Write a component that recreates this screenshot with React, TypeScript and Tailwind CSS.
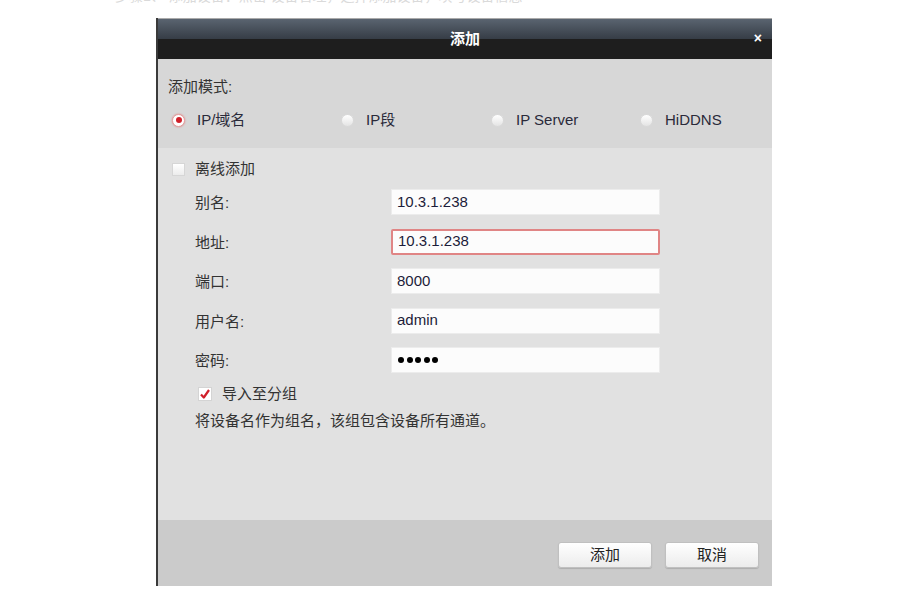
import React from 'react';

const font = { fontFamily: '"Liberation Sans", "Noto Sans CJK SC", sans-serif' };

const fields = [
  { label: '别名:', value: '10.3.1.238', error: false, secret: false },
  { label: '地址:', value: '10.3.1.238', error: true, secret: false },
  { label: '端口:', value: '8000', error: false, secret: false },
  { label: '用户名:', value: 'admin', error: false, secret: false },
  { label: '密码:', value: '12345', error: false, secret: true },
];

const modes = [
  { label: 'IP/域名', w: 'w-[169px]', on: true },
  { label: 'IP段', w: 'w-[150px]', on: false },
  { label: 'IP Server', w: 'w-[149px]', on: false },
  { label: 'HiDDNS', w: 'w-auto', on: false },
];

const Radio: React.FC<{ on: boolean }> = ({ on }) => (
  <span
    className={
      'flex h-[13px] w-[13px] items-center justify-center rounded-full border ' +
      (on
        ? 'border-[#e2a0a0] bg-white shadow-[0_0_2px_#e08080]'
        : 'border-[#dadada] bg-gradient-to-b from-white to-[#e4e4e4]')
    }
  >
    {on && <span className="h-[6px] w-[6px] rounded-full bg-[#d0202a]" />}
  </span>
);

export default function App() {
  return (
    <div className="h-[600px] w-[900px] overflow-hidden bg-white text-[15px] text-[#222]" style={font}>
      {/* clipped line of the page text above */}
      <div className="h-[4px] overflow-hidden">
        <div className="-mt-[12px] pl-[115px] text-[14px] leading-[16px] text-[#dadada]">
          步骤1、 添加设备：点击 设备管理，选择添加设备，填写设备信息
        </div>
      </div>

      <div className="ml-[156px] mt-[14px] w-[616px] border-l-2 border-[#3a3a3a]">
        {/* title bar */}
        <div className="relative h-[41px] border-t border-[#aaaaaa]">
          <div className="h-[20px] bg-gradient-to-b from-[#5a6470] to-[#363d46]" />
          <div className="h-[20px] bg-[#1e1e1e]" />
          <div className="absolute inset-0 flex items-center justify-center text-[15px] font-bold text-white">
            添加
          </div>
          <div className="absolute right-[10px] top-[12px] text-[14px] font-bold leading-none text-white">×</div>
        </div>

        {/* mode section */}
        <div className="h-[89px] bg-[#d7d7d7] px-[10px] pt-[19px]">
          <div className="leading-[18px] text-[#333]">添加模式:</div>
          <div className="mt-[15px] flex h-[18px] items-center pl-[4px]">
            {modes.map((m) => (
              <div key={m.label} className={'flex items-center gap-[12px] ' + m.w}>
                <Radio on={m.on} />
                <span className="leading-[18px] text-[#2a2a3a]">{m.label}</span>
              </div>
            ))}
          </div>
        </div>

        {/* form section */}
        <div className="h-[372px] bg-[#e1e1e1] pl-[14px] pt-[12px]">
          <div className="flex h-[18px] items-center gap-[10px]">
            <span className="h-[13px] w-[13px] border border-[#d6d6d6] bg-gradient-to-b from-white to-[#ececec]" />
            <span className="leading-[18px] text-[#333]">离线添加</span>
          </div>

          <div className="mt-[11px] flex flex-col gap-[13.5px]">
            {fields.map((f) => (
              <div key={f.label} className="flex h-[26px] items-center">
                <div className="w-[219px] pl-[23px] pt-[3px] text-[#333]">{f.label}</div>
                <div
                  className={
                    'flex h-[26px] w-[269px] items-center bg-[#fcfcfc] px-[5px] text-[#1c1c3a] ' +
                    (f.error ? 'rounded-[2px] border-2 border-[#e08585]' : 'border border-[#ececec]')
                  }
                >
                  {f.secret ? (
                    <span className="flex gap-[2.5px] pl-[1px]">
                      {f.value.split('').map((_, i) => (
                        <span key={i} className="h-[6px] w-[6px] rounded-full bg-black" />
                      ))}
                    </span>
                  ) : (
                    <span>{f.value}</span>
                  )}
                </div>
              </div>
            ))}
          </div>

          <div className="mt-[12px] flex h-[18px] items-center gap-[10px] pl-[26px]">
            <span className="flex h-[14px] w-[14px] items-center justify-center border border-[#d4d4d4] bg-white">
              <svg width="12" height="12" viewBox="0 0 12 12">
                <path d="M2 6.5 L4.8 9.5 L10 2" fill="none" stroke="#d0202a" strokeWidth="2.2" strokeLinejoin="round" />
              </svg>
            </span>
            <span className="leading-[18px] text-[#333]">导入至分组</span>
          </div>
          <div className="mt-[9px] pl-[23px] leading-[18px] text-[#333]">将设备名作为组名，该组包含设备所有通道。</div>
        </div>

        {/* footer */}
        <div className="flex h-[66px] items-start justify-end gap-[13px] bg-[#cbcbcb] pr-[13px] pt-[22px]">
          {['添加', '取消'].map((b) => (
            <button
              key={b}
              className="h-[26px] w-[94px] rounded-[3px] border border-[#c0c0c0] bg-gradient-to-b from-white to-[#ececec] text-[15px] text-[#222] shadow-[0_1px_1px_rgba(0,0,0,0.15)]"
            >
              {b}
            </button>
          ))}
        </div>
      </div>
    </div>
  );
}
